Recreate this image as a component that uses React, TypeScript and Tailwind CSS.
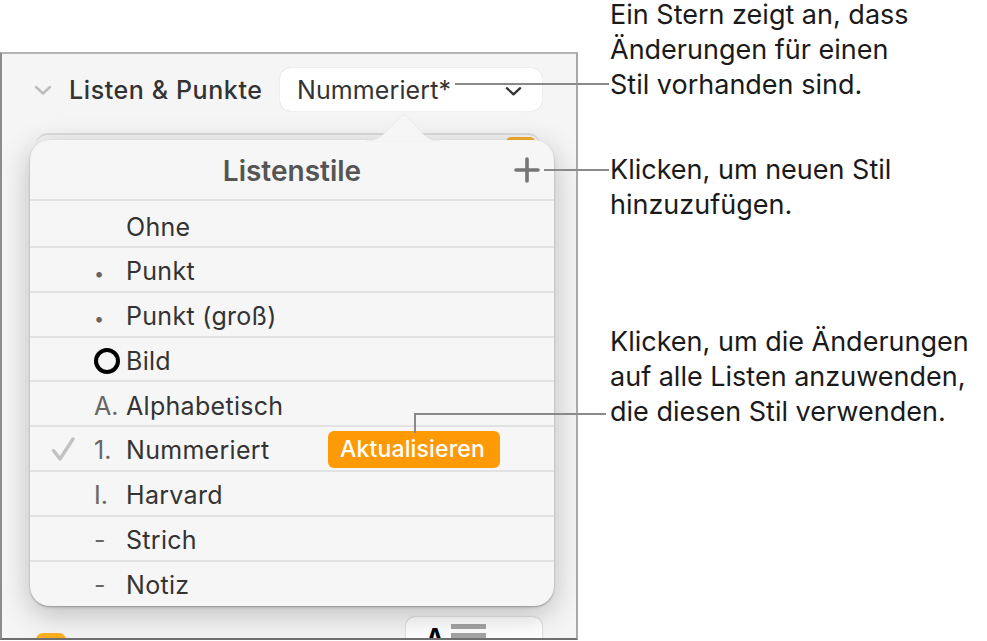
import React from 'react'

const rows: { mark: React.ReactNode; label: string }[] = [
  { mark: '', label: 'Ohne' },
  { mark: <span className="text-[18px]">•</span>, label: 'Punkt' },
  { mark: <span className="text-[18px]">•</span>, label: 'Punkt (groß)' },
  { mark: <span className="block w-[26px] h-[26px] rounded-full border-[4px] border-black" />, label: 'Bild' },
  { mark: 'A.', label: 'Alphabetisch' },
  { mark: '1.', label: 'Nummeriert' },
  { mark: 'I.', label: 'Harvard' },
  { mark: '-', label: 'Strich' },
  { mark: '-', label: 'Notiz' },
]

const Chevron = ({ className }: { className: string }) => (
  <svg className={className} viewBox="0 0 18 10" fill="none" stroke="currentColor" strokeWidth="2.4" strokeLinecap="round" strokeLinejoin="round">
    <path d="M2 2l7 6.5L16 2" />
  </svg>
)

const Callout = ({ lines, className }: { lines: string[]; className?: string }) => (
  <div className={`text-[27px] leading-[35px] text-[#1a1a1a] whitespace-nowrap ${className ?? ''}`}>
    {lines.map((line) => (
      <div key={line}>{line}</div>
    ))}
  </div>
)

export default function App() {
  return (
    <div className="relative flex items-start w-[987px] h-[641px] bg-white overflow-hidden font-['Inter',sans-serif]">
      {/* inspector panel */}
      <div className="relative mt-[52px] flex flex-col flex-none w-[578px] h-[588px] overflow-hidden bg-[#f5f5f5] border-2 border-t-[#b4b4b4] border-r-[#a8a8a8] border-b-[#6e6e6e] border-l-[#8c8c8c]">
        <div className="flex items-center flex-none h-[57px] pt-[14px] pl-[32px]">
          <Chevron className="w-[18px] h-[10px] text-[#bdbdbd]" />
          <span className="w-[211px] ml-[17px] pt-[2px] text-[25px] tracking-[0.6px] font-medium text-[#333] whitespace-nowrap">Listen &amp; Punkte</span>
          <div className="flex items-center w-[262px] h-[43px] px-[17px] rounded-[10px] bg-white shadow-[0_0_1px_rgba(0,0,0,0.25)]">
            <span className="pt-[2px] text-[25px] tracking-[0.1px] text-[#333]">Nummeriert*</span>
            <Chevron className="ml-auto mr-[3px] mt-[3px] w-[17px] h-[10px] text-[#333]" />
          </div>
        </div>

        {/* card behind the popover */}
        <div className="flex-none ml-[34px] mt-[22px] w-[504px] h-[477px] rounded-[12px] border-t-2 border-[#dcdcdc] bg-[#f3f3f3]">
          <div className="ml-auto mr-[5px] mt-[2px] w-[29px] h-[12px] rounded-[5px] bg-[#f5ae2e]" />
        </div>

        <div className="flex items-start flex-none mt-[7px] pl-[34px] pr-[34px]">
          <div className="mt-[16px] w-[30px] h-[30px] rounded-[7px] bg-[#fdae22]" />
          <span className="mt-[13px] ml-[16px] text-[25px] text-[#888]">Gerade</span>
          <div className="ml-auto flex gap-[7px] w-[136px] h-[40px] pl-[20px] pt-[7px] rounded-[9px] bg-white shadow-[0_0_2px_rgba(0,0,0,0.3)]">
            <span className="text-[24px] leading-[28px] font-bold text-black">A</span>
            <div className="flex flex-col gap-[4px] w-[35px]">
              <div className="h-[5px] bg-[#a5a5a5]" />
              <div className="h-[5px] bg-[#a5a5a5]" />
            </div>
          </div>
        </div>

        {/* popover */}
        <div className="absolute left-[28px] top-[86px] flex flex-col w-[524px] h-[466px] rounded-[20px] bg-[#f6f6f6] shadow-[0_1px_2px_rgba(0,0,0,0.3),0_8px_30px_rgba(0,0,0,0.24)]">
          <div className="relative flex flex-none items-center justify-center h-[61px] pt-[2px] border-b-2 border-[#e2e2e2]">
            <span className="text-[28px] font-semibold text-[#555]">Listenstile</span>
            <svg className="absolute left-[484px] top-[17px] w-[26px] h-[26px]" viewBox="0 0 26 26" stroke="#767676" strokeWidth="3.6" strokeLinecap="round">
              <path d="M13 2v22M2 13h22" />
            </svg>
          </div>
          {rows.map((row, i) => (
            <div
              key={row.label}
              className={`flex items-center ${i === 0 ? 'flex-none h-[47px]' : i === rows.length - 1 ? 'flex-1' : 'flex-none h-[44.8px]'} ${i < rows.length - 1 ? 'border-b-2 border-[#e2e2e2]' : ''}`}
            >
              <div className="flex items-center justify-end flex-none w-[45px]">
                {row.label === 'Nummeriert' && (
                  <svg className="w-[24px] h-[24px]" viewBox="0 0 24 24" fill="none" stroke="#c2c2c2" strokeWidth="3.4" strokeLinecap="round" strokeLinejoin="round">
                    <path d="M2.5 13.5L9 22L22 2" />
                  </svg>
                )}
              </div>
              <div className={`flex-none w-[33px] ml-[19px] text-[25px] text-[#666] ${i === rows.length - 1 ? 'pt-[3px]' : 'pt-[5px]'}`}>{row.mark}</div>
              <span className={`flex-none w-[201px] -ml-[1px] text-[25px] tracking-[0.3px] text-[#333] ${i === 0 ? 'pt-[8px]' : i === rows.length - 1 ? 'pt-[3px]' : 'pt-[5px]'}`}>{row.label}</span>
              {row.label === 'Nummeriert' && (
                <div className="flex items-center justify-center w-[172px] h-[37px] mt-[2px] ml-[1px] pr-[3px] rounded-[6px] bg-[#fe9a05] text-[23px] tracking-[0.15px] font-medium text-white">
                  Aktualisieren
                </div>
              )}
            </div>
          ))}
        </div>
        <svg className="absolute left-[342px] top-[57px] w-[100px] h-[32px]" viewBox="0 0 100 32">
          <path d="M22 30C32 30 38 25 43 20L57 5Q60 2 63 5L76 20C81 25 86 30 96 30V31H22Z" fill="#f6f6f6" stroke="#e4e4e4" strokeWidth="0.6" />
          <path d="M20 30.5H98V32H20Z" fill="#f6f6f6" />
        </svg>
      </div>

      {/* callouts */}
      <div className="flex flex-col -mt-[3px] pl-[32px]">
        <Callout lines={['Ein Stern zeigt an, dass', 'Änderungen für einen', 'Stil vorhanden sind.']} />
        <Callout className="mt-[50px]" lines={['Klicken, um neuen Stil', 'hinzuzufügen.']} />
        <Callout className="mt-[102px]" lines={['Klicken, um die Änderungen', 'auf alle Listen anzuwenden,', 'die diesen Stil verwenden.']} />
      </div>

      {/* leader lines */}
      <div className="absolute left-[455px] top-[83px] w-[154px] h-[2px] bg-[#8a8a8a]" />
      <div className="absolute left-[544px] top-[169px] w-[65px] h-[2px] bg-[#8a8a8a]" />
      <div className="absolute left-[414px] top-[413px] w-[192px] h-[2px] bg-[#8a8a8a]" />
      <div className="absolute left-[414px] top-[413px] w-[2px] h-[20px] bg-[#8a8a8a]" />
    </div>
  )
}
